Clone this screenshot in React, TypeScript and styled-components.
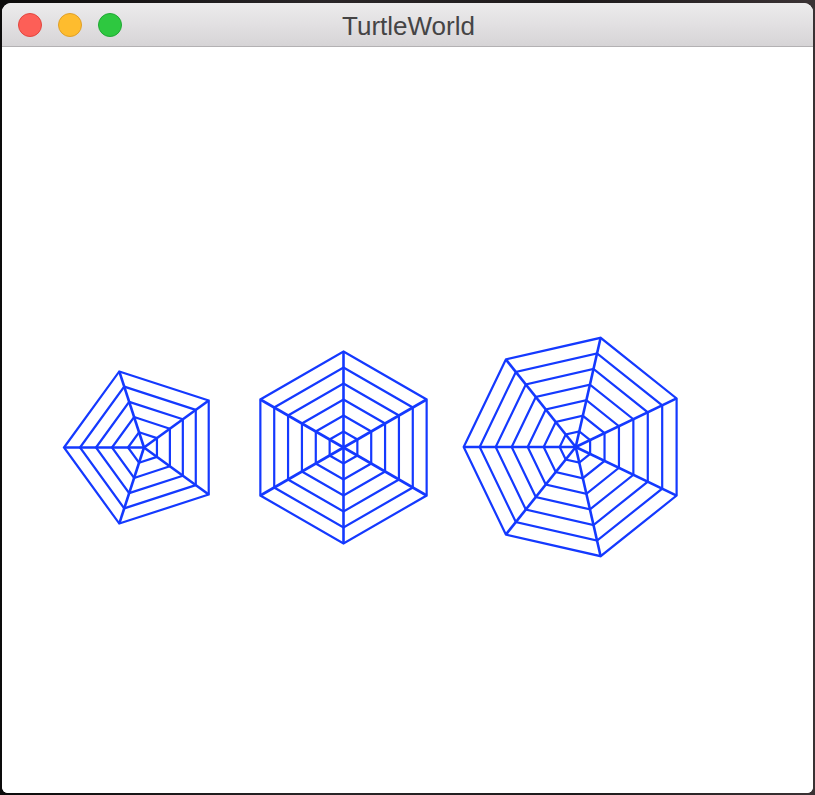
import React from "react";
import styled, { createGlobalStyle } from "styled-components";

const Global = createGlobalStyle`
  html, body {
    margin: 0;
    padding: 0;
    background: #141213;
  }
  #root {
    width: 815px;
    height: 795px;
    overflow: hidden;
  }
`;

const Desktop = styled.div`
  width: 815px;
  height: 795px;
  box-sizing: border-box;
  padding: 3px 2px 2px 2px;
  background: linear-gradient(90deg, #0c0b0b 0%, #2a2628 40%, #1d1a1b 70%, #3a3234 100%);
`;

const Window = styled.div`
  width: 811px;
  height: 790px;
  display: flex;
  flex-direction: column;
  border-radius: 9px 9px 6px 6px;
  overflow: hidden;
  background: #ffffff;
`;

const TitleBar = styled.div`
  height: 43px;
  flex: none;
  display: grid;
  grid-template-columns: 1fr auto 1fr;
  align-items: center;
  background: linear-gradient(180deg, #ecebec 0%, #e2e0e2 50%, #d6d4d6 100%);
  border-bottom: 1px solid #b3b1b3;
`;

const Lights = styled.div`
  display: flex;
  gap: 16px;
  padding-left: 16px;
  align-items: center;
`;

const Light = styled.span<{ $fill: string; $edge: string }>`
  width: 24px;
  height: 24px;
  border-radius: 50%;
  box-sizing: border-box;
  background: ${(p) => p.$fill};
  border: 1px solid ${(p) => p.$edge};
  margin-top: 1px;
`;

const Title = styled.div`
  font-family: "Liberation Sans", Arial, sans-serif;
  font-size: 26px;
  line-height: 30px;
  color: #454445;
  padding-left: 2px;
  margin-top: 2px;
`;

const Canvas = styled.div`
  flex: 1;
  background: #ffffff;
  display: flex;
`;

const Drawing = styled.svg`
  display: block;
  width: 811px;
  height: 746px;
`;

type Web = { cx: number; cy: number; sides: number; start: number };

// page-coordinate centers translated to canvas origin (2, 47)
const webs: Web[] = [
  { cx: 142, cy: 400.5, sides: 5, start: 180 },
  { cx: 341.5, cy: 400.5, sides: 6, start: 90 },
  { cx: 573.7, cy: 400, sides: 7, start: 180 },
];

const STEP = 16;
const BLUE = "#1439ff";

function vertices(w: Web, r: number) {
  const pts: [number, number][] = [];
  for (let i = 0; i < w.sides; i++) {
    const a = ((w.start - (360 / w.sides) * i) * Math.PI) / 180;
    pts.push([w.cx + r * Math.cos(a), w.cy - r * Math.sin(a)]);
  }
  return pts;
}

function SpiderWeb({ w }: { w: Web }) {
  const levels = Array.from({ length: w.sides }, (_, i) => (i + 1) * STEP);
  const outer = vertices(w, w.sides * STEP);
  return (
    <g stroke={BLUE} strokeWidth={2.2} fill="none" strokeLinejoin="miter">
      {levels.map((r) => (
        <polygon
          key={r}
          points={vertices(w, r)
            .map(([x, y]) => `${x.toFixed(2)},${y.toFixed(2)}`)
            .join(" ")}
        />
      ))}
      {outer.map(([x, y], i) => (
        <line key={i} x1={w.cx} y1={w.cy} x2={x} y2={y} strokeWidth={2.6} />
      ))}
    </g>
  );
}

export default function App() {
  return (
    <>
      <Global />
      <Desktop>
        <Window>
          <TitleBar>
            <Lights>
              <Light $fill="#fd5f57" $edge="#e2463f" />
              <Light $fill="#febc2e" $edge="#e0a028" />
              <Light $fill="#2ec840" $edge="#20a834" />
            </Lights>
            <Title>TurtleWorld</Title>
            <span />
          </TitleBar>
          <Canvas>
            <Drawing viewBox="0 0 811 746">
              {webs.map((w) => (
                <SpiderWeb key={w.sides} w={w} />
              ))}
            </Drawing>
          </Canvas>
        </Window>
      </Desktop>
    </>
  );
}
